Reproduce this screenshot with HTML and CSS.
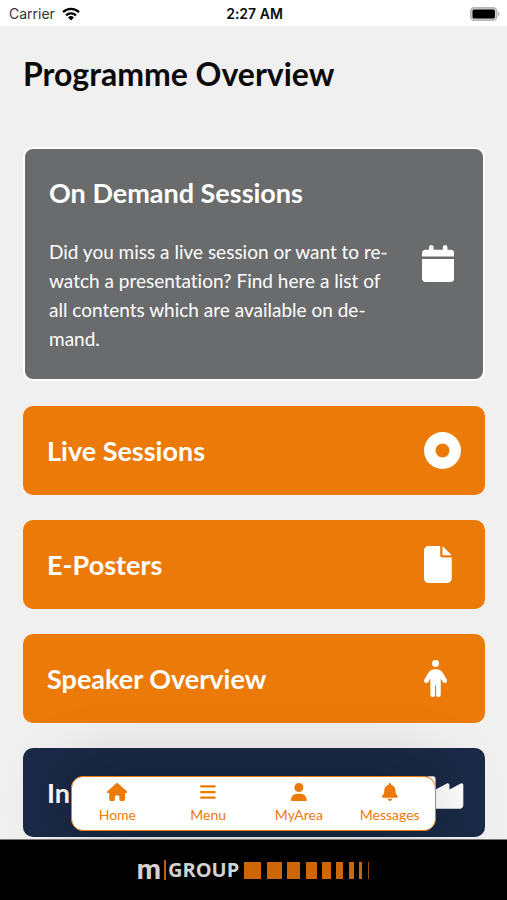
FILE: index.html
```html
<!DOCTYPE html>
<html lang="en">
<head>
<meta charset="utf-8">
<meta name="viewport" content="width=device-width, initial-scale=1">
<title>Programme Overview</title>
<link rel="stylesheet" href="styles.css">
</head>
<body>
<header class="status">
  <div class="status-left">
    <span>Carrier</span>
    <svg class="wifi" viewBox="0 0 18 14" aria-hidden="true"><g fill="none" stroke="#000" stroke-width="2.3"><path d="M1 5.2a11.5 11.5 0 0 1 16 0"/><path d="M4 8.3a7.2 7.2 0 0 1 10 0"/></g><path d="M9 13.6 6 10.500a4.300 4.300 0 0 1 6 0z"/></svg>
  </div>
  <time class="clock">2:27 AM</time>
  <div class="status-right">
    <svg class="battery" viewBox="0 0 30 14" aria-hidden="true"><rect x=".7" y=".7" width="26" height="12.600" rx="3.500" fill="#d0d0d0" stroke="#b5b5b5" stroke-width="1.400"/><rect x="2.500" y="2.500" width="22.400" height="9" rx="1.500"/><path d="M28 4.500c2.200.8 2.200 4.200 0 5z" fill="#b5b5b5"/></svg>
  </div>
</header>

<div class="screen">
  <main class="content">
    <h1>Programme Overview</h1>
    <div class="cards">
      <a class="card card-featured" href="#on-demand">
        <div class="card-text">
          <h2>On Demand Sessions</h2>
          <p>Did you miss a live session or want to re-watch a presentation? Find here a list of all contents which are available on de&shy;mand.</p>
        </div>
        <span class="card-icon"><svg viewBox="0 0 448 512" aria-hidden="true"><path d="M96 32V64H48C21.500 64 0 85.500 0 112v48H448V112c0-26.500-21.500-48-48-48H352V32c0-17.700-14.300-32-32-32s-32 14.300-32 32V64H160V32c0-17.700-14.300-32-32-32S96 14.300 96 32zM448 192H0V464c0 26.500 21.500 48 48 48H400c26.500 0 48-21.500 48-48V192z"/></svg></span>
      </a>
      <a class="card" href="#live">
        <h2>Live Sessions</h2>
        <span class="card-icon"><svg viewBox="0 0 512 512" aria-hidden="true"><path fill-rule="evenodd" d="M256 0a256 256 0 1 0 0 512a256 256 0 1 0 0-512zM256 160a96 96 0 1 1 0 192a96 96 0 1 1 0-192z"/></svg></span>
      </a>
      <a class="card" href="#posters">
        <h2>E-Posters</h2>
        <span class="card-icon"><svg viewBox="0 0 384 512" aria-hidden="true"><path d="M0 64C0 28.700 28.700 0 64 0H224V128c0 17.700 14.300 32 32 32H384V448c0 35.300-28.700 64-64 64H64c-35.300 0-64-28.700-64-64V64zm384 64H256V0L384 128z"/></svg></span>
      </a>
      <a class="card" href="#speakers">
        <h2>Speaker Overview</h2>
        <span class="card-icon"><svg viewBox="0 0 320 512" aria-hidden="true"><path d="M112 48a48 48 0 1 1 96 0 48 48 0 1 1-96 0zm40 304V480c0 17.700-14.300 32-32 32s-32-14.300-32-32V256.900L59.400 304.500c-9.100 15.100-28.800 20-43.900 10.900s-20-28.800-10.900-43.900l58.300-97c17.400-28.900 48.600-46.600 82.300-46.600h29.700c33.700 0 64.900 17.700 82.300 46.600l58.300 97c9.100 15.100 4.200 34.800-10.900 43.900s-34.800 4.200-43.900-10.900L232 256.900V480c0 17.700-14.300 32-32 32s-32-14.300-32-32V352H152z"/></svg></span>
      </a>
      <a class="card card-navy" href="#more">
        <h2>In</h2>
        <span class="card-icon"><svg viewBox="-32 0 576 512" aria-hidden="true"><path d="M32 32C14.300 32 0 46.300 0 64V432c0 26.500 21.500 48 48 48H464c26.500 0 48-21.500 48-48V152.200c0-18.200-19.400-29.700-35.400-21.100L320 215.400V152.200c0-18.200-19.400-29.700-35.400-21.100L128 215.400V64c0-17.700-14.300-32-32-32H32z"/></svg></span>
      </a>
    </div>
  </main>

  <nav class="tabs" aria-label="Main">
    <a href="#home"><svg viewBox="0 0 576 512" aria-hidden="true"><path d="M575.800 255.500c0 18-15 32.100-32 32.100h-32l.7 160.200V472c0 22.100-17.900 40-40 40H392c-22.100 0-40-17.900-40-40V384c0-17.700-14.300-32-32-32H256c-17.700 0-32 14.300-32 32v88c0 22.100-17.900 40-40 40H104c-22.100 0-40-17.900-40-40V287.600H32c-18 0-32-14-32-32.100c0-9 3-17 10-24L266.400 8c7-7 15-8 22-8s15 2 21 7L564.800 231.500c8 7 12 15 11 24z"/></svg><span>Home</span></a>
    <a href="#menu"><svg viewBox="0 0 448 512" aria-hidden="true"><rect y="64" width="448" height="64" rx="32"/><rect y="224" width="448" height="64" rx="32"/><rect y="384" width="448" height="64" rx="32"/></svg><span>Menu</span></a>
    <a href="#myarea"><svg viewBox="0 0 448 512" aria-hidden="true"><path d="M224 256A128 128 0 1 0 224 0a128 128 0 1 0 0 256zm-45.700 48C79.800 304 0 383.800 0 482.300C0 498.700 13.300 512 29.700 512H418.300c16.400 0 29.700-13.300 29.700-29.700C448 383.800 368.200 304 269.700 304H178.300z"/></svg><span>MyArea</span></a>
    <a href="#messages"><svg viewBox="0 0 448 512" aria-hidden="true"><path d="M224 0c-17.700 0-32 14.300-32 32V51.200C119 66 64 130.600 64 208v18.800c0 47-17.300 92.400-48.500 127.600l-7.400 8.300c-8.400 9.400-10.400 22.900-5.300 34.400S19.400 416 32 416H416c12.600 0 24-7.400 29.200-18.900s3.100-25-5.300-34.400l-7.400-8.300C401.300 319.200 384 273.900 384 226.800V208c0-77.400-55-142-128-156.800V32c0-17.700-14.300-32-32-32zm45.300 493.300c12-12 18.700-28.300 18.700-45.300H160c0 17 6.700 33.300 18.700 45.300s28.300 18.700 45.300 18.700s33.300-6.700 45.300-18.700z"/></svg><span>Messages</span></a>
  </nav>
</div>

<footer class="brand">
  <span class="brand-m">m</span>
  <span class="brand-rule"></span>
  <span class="brand-group">GROUP</span>
  <svg class="brand-bars" viewBox="0 0 126 17" aria-hidden="true"><path d="M0 0h17v17H0zM23 0h15v17H23zM43 0h13v17H43zM62 0h11v17H62zM78 0h9v17H78zM92 0h7v17H92zM105 0h5v17H105zM115 0h3v17H115z"/><path d="M124 0h1v17h-1z" opacity=".75"/></svg>
</footer>
</body>
</html>
```

FILE: styles.css
```css
* {
  box-sizing: border-box;
}

body {
  margin: 0;
  height: 100vh;
  display: flex;
  flex-direction: column;
  background: #f0f0f0;
  font-family: Lato, "Liberation Sans", sans-serif;
  font-variant-ligatures: none;
  color: #0a0a0a;
}

a {
  color: inherit;
  text-decoration: none;
}

h1,
h2,
p {
  margin: 0;
}

.status {
  flex: none;
  display: grid;
  grid-template-columns: 1fr auto 1fr;
  align-items: center;
  height: 26px;
  padding: 2px 7px 0 9px;
  background: #fff;
  font-family: Inter, "Liberation Sans", sans-serif;
  font-size: 14px;
  line-height: 20px;
}

.status-left {
  display: flex;
  align-items: center;
  gap: 7px;
  color: #333;
}

.status-right {
  display: flex;
  justify-content: flex-end;
}

.clock {
  font-weight: 600;
}

.wifi {
  width: 18px;
  height: 14px;
}

.battery {
  width: 30px;
  height: 14px;
}

.screen {
  position: relative;
  flex: 1;
  min-height: 0;
  overflow: hidden;
}

.content {
  height: 100%;
  overflow: hidden;
  padding: 28px 22px 0 23px;
}

h1 {
  font-size: 32px;
  line-height: 40px;
  font-weight: 700;
}

.cards {
  display: flex;
  flex-direction: column;
  gap: 25px;
  margin-top: 53px;
}

.card {
  flex: none;
  display: flex;
  align-items: center;
  justify-content: space-between;
  gap: 20px;
  min-height: 89px;
  padding: 24px;
  border-radius: 10px;
  background: #ec7a08;
  color: #fff;
}

.card-featured {
  padding-bottom: 26px;
  border: 2px solid #fff;
  background: #6a6b6c;
}

.card-navy {
  background: #1a2946;
}

h2 {
  font-size: 27px;
  line-height: 40px;
  font-weight: 700;
}

.card-text {
  flex: 1;
}

.card p {
  margin-top: 24px;
  font-size: 19px;
  line-height: 29px;
}

.card-icon {
  flex: none;
  width: 37px;
  height: 37px;
}

.card-icon svg {
  display: block;
  height: 37px;
  fill: #fff;
}

.tabs {
  position: absolute;
  left: 14%;
  right: 14%;
  bottom: 8px;
  display: grid;
  grid-template-columns: repeat(4, 1fr);
  padding: 6px 0 5px;
  border: 1px solid #ec7a08;
  border-radius: 12px;
  background: #fff;
  box-shadow: 0 0 70px rgba(0, 0, 0, 0.25);
  color: #ec7a08;
  font-size: 14px;
  line-height: 20px;
}

.tabs a {
  display: flex;
  flex-direction: column;
  align-items: center;
  gap: 4px;
}

.tabs svg {
  height: 18px;
  fill: currentColor;
}

.brand {
  flex: none;
  display: flex;
  align-items: center;
  justify-content: center;
  height: 61px;
  border-top: 1px solid #777;
  background: #000;
  color: #d2d2d2;
}

.brand-m {
  font: 700 28px/32px Roboto, sans-serif;
}

.brand-rule {
  width: 2px;
  height: 20px;
  margin: 0 2px 0 3px;
  background: #c45f06;
}

.brand-group {
  font: 700 20px/32px "Open Sans", sans-serif;
}

.brand-bars {
  width: 126px;
  height: 17px;
  margin-left: 5px;
  fill: #cc6606;
}
```
